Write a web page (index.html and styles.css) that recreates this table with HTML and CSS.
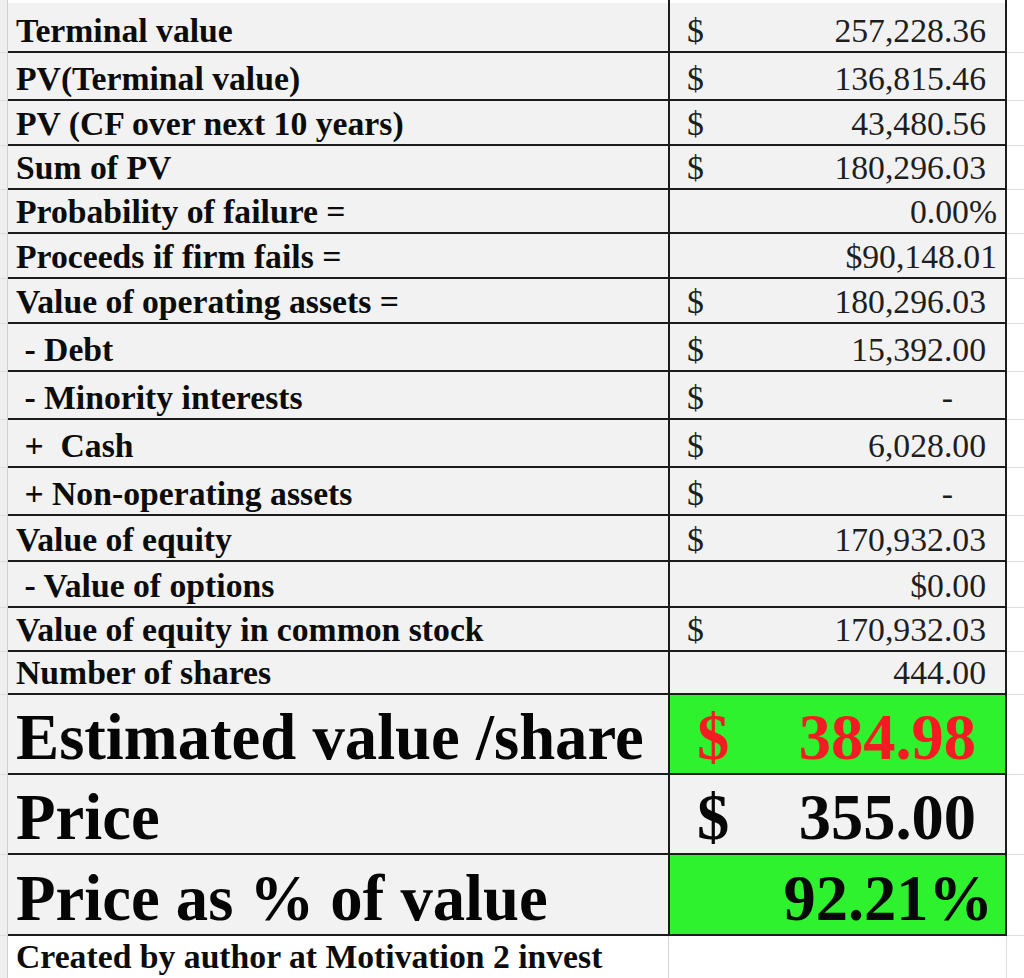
FILE: index.html
```html
<!DOCTYPE html>
<html lang="en">
<head>
<meta charset="utf-8">
<title>Valuation summary</title>
<link rel="stylesheet" href="styles.css">
</head>
<body>
<div class="sheet">
  <div class="row top"><div class="gut"></div><div class="lbl"></div><div class="val"></div><div class="pad"></div></div>

  <div class="row h50"><div class="gut"></div><div class="lbl">Terminal value</div><div class="val acct"><span>$</span><span>257,228.36</span></div><div class="pad"></div></div>
  <div class="row h48"><div class="gut"></div><div class="lbl">PV(Terminal value)</div><div class="val acct"><span>$</span><span>136,815.46</span></div><div class="pad"></div></div>
  <div class="row h45"><div class="gut"></div><div class="lbl">PV (CF over next 10 years)</div><div class="val acct"><span>$</span><span>43,480.56</span></div><div class="pad"></div></div>
  <div class="row h44"><div class="gut"></div><div class="lbl">Sum of PV</div><div class="val acct"><span>$</span><span>180,296.03</span></div><div class="pad"></div></div>
  <div class="row h44"><div class="gut"></div><div class="lbl">Probability of failure =</div><div class="val plain"><span>0.00%</span></div><div class="pad"></div></div>
  <div class="row h45"><div class="gut"></div><div class="lbl">Proceeds if firm fails =</div><div class="val plain"><span>$90,148.01</span></div><div class="pad"></div></div>
  <div class="row h45"><div class="gut"></div><div class="lbl">Value of operating assets =</div><div class="val acct"><span>$</span><span>180,296.03</span></div><div class="pad"></div></div>
  <div class="row h48"><div class="gut"></div><div class="lbl"> - Debt</div><div class="val acct"><span>$</span><span>15,392.00</span></div><div class="pad"></div></div>
  <div class="row h48"><div class="gut"></div><div class="lbl"> - Minority interests</div><div class="val acct"><span>$</span><span class="dash">-</span></div><div class="pad"></div></div>
  <div class="row h48"><div class="gut"></div><div class="lbl"> +  Cash</div><div class="val acct"><span>$</span><span>6,028.00</span></div><div class="pad"></div></div>
  <div class="row h48"><div class="gut"></div><div class="lbl"> + Non-operating assets</div><div class="val acct"><span>$</span><span class="dash">-</span></div><div class="pad"></div></div>
  <div class="row h46"><div class="gut"></div><div class="lbl">Value of equity</div><div class="val acct"><span>$</span><span>170,932.03</span></div><div class="pad"></div></div>
  <div class="row h46"><div class="gut"></div><div class="lbl"> - Value of options</div><div class="val acct right"><span>$0.00</span></div><div class="pad"></div></div>
  <div class="row h44"><div class="gut"></div><div class="lbl">Value of equity in common stock</div><div class="val acct"><span>$</span><span>170,932.03</span></div><div class="pad"></div></div>
  <div class="row h43"><div class="gut"></div><div class="lbl">Number of shares</div><div class="val acct right"><span>444.00</span></div><div class="pad"></div></div>

  <div class="row h80 big"><div class="gut"></div><div class="lbl">Estimated value /share</div><div class="val acct green red"><span>$</span><span>384.98</span></div><div class="pad"></div></div>
  <div class="row h80 big"><div class="gut"></div><div class="lbl">Price</div><div class="val acct"><span>$</span><span>355.00</span></div><div class="pad"></div></div>
  <div class="row h81 big"><div class="gut"></div><div class="lbl">Price as % of value</div><div class="val plain green"><span>92.21%</span></div><div class="pad"></div></div>

  <div class="row foot"><div class="gut"></div><div class="lbl">Created by author at Motivation 2 invest</div><div class="val"></div><div class="pad"></div></div>
</div>
</body>
</html>
```

FILE: styles.css
```css
* { box-sizing: border-box; }

html, body {
  margin: 0;
  padding: 0;
  background: #ffffff;
}

body {
  width: 1024px;
  height: 978px;
  overflow: hidden;
  font-family: "Liberation Serif", "Times New Roman", serif;
  color: #111;
}

.sheet {
  display: flex;
  flex-direction: column;
}

.row {
  display: grid;
  grid-template-columns: 8px 660px 339px 1fr;
  flex: none;
}

.h43 { height: 43px; }
.h44 { height: 44px; }
.h45 { height: 45px; }
.h46 { height: 46px; }
.h48 { height: 48px; }
.h50 { height: 50px; }
.h80 { height: 80px; }
.h81 { height: 81px; }

.row.top { height: 3px; }
.row.top .lbl,
.row.top .val {
  background: #ffffff;
  border-bottom: 1px solid #d3d3d3;
}
.row.top .val { border-left: 2px solid #1c1c1c; border-right: 2px solid #1c1c1c; }

.gut {
  background: #efefef;
  border-right: 1px solid #d0d0d0;
  border-bottom: 1px solid #dcdcdc;
}

.pad {
  background: #ffffff;
  border-bottom: 1px solid #dedede;
}

.lbl {
  background: #f2f2f2;
  border-bottom: 2px solid #1c1c1c;
  display: flex;
  align-items: flex-end;
  padding: 0 0 3px 8px;
  font-weight: bold;
  font-size: 33.7px;
  line-height: 1;
  white-space: pre;
  color: #0c0c0c;
  overflow: hidden;
}

.val {
  background: #f2f2f2;
  border-left: 2px solid #1c1c1c;
  border-right: 2px solid #1c1c1c;
  border-bottom: 2px solid #1c1c1c;
  display: flex;
  align-items: flex-end;
  font-size: 33.7px;
  line-height: 1;
  color: #1e1e1e;
  white-space: pre;
}

.val.acct {
  justify-content: space-between;
  padding: 0 19px 3px 17px;
}

.val.acct.right {
  justify-content: flex-end;
}

.val.plain {
  justify-content: flex-end;
  padding: 0 8px 3px 0;
}

.dash {
  margin-right: 33px;
}

.big .lbl {
  font-size: 64.7px;
  padding-bottom: 3px;
  color: #050505;
}

.big .val {
  font-size: 64.5px;
  font-weight: bold;
  color: #080808;
  padding-bottom: 3px;
}

.big .val.acct {
  padding-left: 27px;
  padding-right: 29px;
}

.big .val.plain {
  padding-right: 12px;
}

.val.green {
  background: #2ef22e;
}

.val.red {
  color: #f21c22;
}

.row.foot {
  height: 42px;
}

.row.foot .lbl {
  background: #ffffff;
  border-bottom: none;
  padding-bottom: 4px;
}

.row.foot .val {
  background: #ffffff;
  border-left: 1px solid #d6d6d6;
  border-right: 1px solid #e2e2e2;
  border-bottom: none;
}

.row.foot .gut,
.row.foot .pad {
  border-bottom: none;
}
```
